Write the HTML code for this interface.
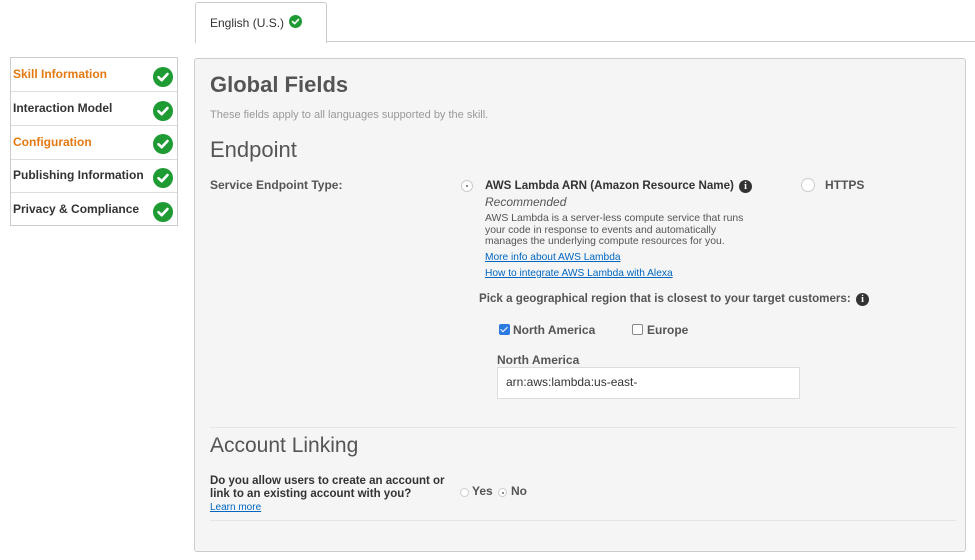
<!DOCTYPE html>
<html><head><style>
*{margin:0;padding:0;box-sizing:border-box}
body{width:975px;height:560px;background:#fff;font-family:"Liberation Sans",Arial,sans-serif;position:relative;overflow:hidden;color:#333}
.a{position:absolute;white-space:nowrap}
.chk{position:absolute;width:20px;height:20px}
.side{position:absolute;left:10px;top:57px;width:168px;height:169px;border:1px solid #ccc}
.row{position:absolute;left:0;width:166px;height:34px;border-bottom:1px solid #ddd;font-size:12px;font-weight:bold;padding:9px 0 0 2px}
.or{color:#e47911}
.radio{position:absolute;width:12px;height:12px;border:1px solid #ccc;border-radius:50%;background:#fff}
.info{position:absolute;width:13px;height:13px;border-radius:50%;background:#333;color:#fff;font-size:10px;font-weight:bold;text-align:center;line-height:13px;font-family:"Liberation Serif",serif}
a{color:#0066c0;text-decoration:underline}
</style></head><body>
<svg width="0" height="0" style="position:absolute"><defs><symbol id="ck" viewBox="0 0 20 20"><circle cx="10" cy="10" r="10" fill="#1f9b34"/><path d="M5.5 10.2 L8.7 13.2 L14.5 7" stroke="#fff" stroke-width="2.6" fill="none" stroke-linecap="round" stroke-linejoin="round"/></symbol></defs></svg>
<div class="a" style="left:195px;top:2px;width:132px;height:41px;border:1px solid #ccc;border-bottom:none;border-radius:3px 3px 0 0;background:#fff"></div>
<div class="a" style="left:327px;top:41px;width:648px;height:1px;background:#ccc"></div>
<div class="a" style="left:210px;top:16px;font-size:12px;color:#333">English (U.S.)</div>
<svg class="chk" style="left:289px;top:15px;width:13px;height:13px"><use href="#ck"/></svg>

<div class="side">
<div class="row or" style="top:0">Skill Information</div>
<div class="row" style="top:34px">Interaction Model</div>
<div class="row or" style="top:68px">Configuration</div>
<div class="row" style="top:101px">Publishing Information</div>
<div class="row" style="top:135px;border-bottom:none">Privacy &amp; Compliance</div>
</div>
<svg class="chk" style="left:153px;top:67px"><use href="#ck"/></svg>
<svg class="chk" style="left:153px;top:101px"><use href="#ck"/></svg>
<svg class="chk" style="left:153px;top:134px"><use href="#ck"/></svg>
<svg class="chk" style="left:153px;top:168px"><use href="#ck"/></svg>
<svg class="chk" style="left:153px;top:202px"><use href="#ck"/></svg>

<div class="a" style="left:194px;top:58px;width:772px;height:494px;background:#f5f5f5;border:1px solid #ccc;border-radius:3px"></div>
<div class="a" style="left:210px;top:72px;font-size:22px;font-weight:bold;color:#555">Global Fields</div>
<div class="a" style="left:210px;top:109px;font-size:11px;color:#999">These fields apply to all languages supported by the skill.</div>
<div class="a" style="left:210px;top:137px;font-size:22px;color:#555">Endpoint</div>
<div class="a" style="left:210px;top:178px;font-size:12px;font-weight:bold;color:#555">Service Endpoint Type:</div>

<div class="radio" style="left:461px;top:180px"><div style="position:absolute;left:4px;top:4px;width:2px;height:2px;border-radius:50%;background:#666"></div></div>
<div class="a" style="left:485px;top:179px;font-size:11.6px;font-weight:bold;color:#333">AWS Lambda ARN (Amazon Resource Name)</div>
<div class="info" style="left:739px;top:180px">i</div>
<div class="radio" style="left:801px;top:178px;width:14px;height:14px"></div>
<div class="a" style="left:825px;top:178px;font-size:12px;font-weight:bold;color:#555">HTTPS</div>
<div class="a" style="left:485px;top:195px;font-size:12px;font-style:italic;color:#555">Recommended</div>
<div class="a" style="left:485px;top:213px;font-size:10.4px;line-height:11.5px;color:#555">AWS Lambda is a server-less compute service that runs<br>your code in response to events and automatically<br>manages the underlying compute resources for you.</div>
<div class="a" style="left:485px;top:252px;font-size:10.2px"><a>More info about AWS Lambda</a></div>
<div class="a" style="left:485px;top:268px;font-size:10.2px"><a>How to integrate AWS Lambda with Alexa</a></div>
<div class="a" style="left:479px;top:292px;font-size:11.6px;font-weight:bold;color:#555">Pick a geographical region that is closest to your target customers:</div>
<div class="info" style="left:856px;top:293px">i</div>
<div class="a" style="left:499px;top:324px;width:11px;height:11px;border-radius:2px;background:#2a7ae2"></div>
<div class="a" style="left:502px;top:325px;width:4px;height:7px;border:solid #fff;border-width:0 1.5px 1.5px 0;transform:rotate(45deg)"></div>
<div class="a" style="left:513px;top:323px;font-size:12px;font-weight:bold;color:#555">North America</div>
<div class="a" style="left:632px;top:324px;width:11px;height:11px;border:1px solid #888;border-radius:2px;background:#fff"></div>
<div class="a" style="left:647px;top:323px;font-size:12px;font-weight:bold;color:#555">Europe</div>
<div class="a" style="left:497px;top:353px;font-size:12px;font-weight:bold;color:#555">North America</div>
<div class="a" style="left:497px;top:367px;width:303px;height:32px;background:#fff;border:1px solid #ddd"></div>
<div class="a" style="left:506px;top:375px;font-size:12px;color:#333">arn:aws:lambda:us-east-</div>

<div class="a" style="left:210px;top:427px;width:746px;height:1px;background:#e5e5e5"></div>
<div class="a" style="left:210px;top:434px;font-size:21px;color:#555">Account Linking</div>
<div class="a" style="left:210px;top:475px;font-size:11.5px;font-weight:bold;line-height:13px;color:#333">Do you allow users to create an account or<br>link to an existing account with you?</div>
<div class="a" style="left:210px;top:502px;font-size:10px"><a>Learn more</a></div>
<div class="radio" style="left:460px;top:488px;width:9px;height:9px"></div>
<div class="a" style="left:472px;top:484px;font-size:12px;font-weight:bold;color:#555">Yes</div>
<div class="radio" style="left:498px;top:488px;width:9px;height:9px"><div style="position:absolute;left:3px;top:3px;width:2px;height:2px;border-radius:50%;background:#666"></div></div>
<div class="a" style="left:511px;top:484px;font-size:12px;font-weight:bold;color:#555">No</div>
<div class="a" style="left:210px;top:520px;width:746px;height:1px;background:#e5e5e5"></div>
</body></html>
